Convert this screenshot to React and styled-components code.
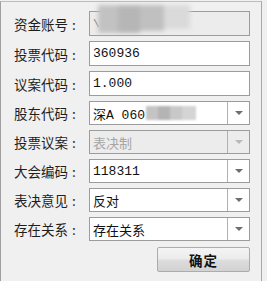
import React from "react";
import styled, { createGlobalStyle } from "styled-components";

const GlobalStyle = createGlobalStyle`
  html, body {
    margin: 0;
    padding: 0;
    background: #f0f0f0;
  }
  body {
    font-family: "Noto Sans CJK SC", "Liberation Sans", sans-serif;
  }
`;

const rows = [
  { label: "资金账号", kind: "masked" },
  { label: "投票代码", kind: "text", value: "360936" },
  { label: "议案代码", kind: "text", value: "1.000" },
  { label: "股东代码", kind: "combo", value: "深A 060", masked: true },
  { label: "投票议案", kind: "combo", value: "表决制", disabled: true },
  { label: "大会编码", kind: "combo", value: "118311" },
  { label: "表决意见", kind: "combo", value: "反对" },
  { label: "存在关系", kind: "combo", value: "存在关系" },
];

const App = () => {
  return (
    <>
      <GlobalStyle />
      <Frame>
        <Form>
          {rows.map((row) => (
            <Row key={row.label} $combo={row.kind === "combo"}>
              <Label>
                {row.label}
                <Colon>:</Colon>
              </Label>
              {row.kind === "combo" ? (
                <Combo $disabled={row.disabled}>
                  <ComboText $disabled={row.disabled}>
                    {row.value}
                    {row.masked && (
                      <Smudge>
                        <Blot $w={12} $c="#c4c4c4" />
                        <Blot $w={12} $c="#b4b4b4" />
                        <Blot $w={12} $c="#c8c8c8" />
                        <Blot $w={14} $c="#d4d4d4" />
                      </Smudge>
                    )}
                  </ComboText>
                  <ArrowBox>
                    <Arrow $disabled={row.disabled} />
                  </ArrowBox>
                </Combo>
              ) : (
                <Field $readonly={row.kind === "masked"}>
                  {row.kind === "masked" ? (
                    <>
                      <Tick>\</Tick>
                      <TopSmudge>
                        <Blot $w={20} $c="#c2c2c2" $h={28} />
                        <Blot $w={22} $c="#b6b6b6" $h={28} />
                        <Blot $w={24} $c="#c0c0c0" $h={26} />
                        <Blot $w={26} $c="#dadada" $h={24} />
                      </TopSmudge>
                    </>
                  ) : (
                    row.value
                  )}
                </Field>
              )}
            </Row>
          ))}
        </Form>
        <Footer>
          <Button>确定</Button>
        </Footer>
      </Frame>
    </>
  );
};

export default App;

const Frame = styled.div`
  box-sizing: border-box;
  width: 262px;
  height: 281px;
  margin-top: 1px;
  border-left: 1px solid #a0a0a0;
  border-top: 1px solid #bdbdbd;
  border-right: 1px solid #a8a8a8;
  padding: 9px 0 0 13px;
`;
const Form = styled.div`
  display: flex;
  flex-direction: column;
  gap: 5px;
`;
const Row = styled.div`
  display: grid;
  grid-template-columns: 75px 161px;
  align-items: center;
  height: ${(p) => (p.$combo ? "24px" : "25px")};
`;
const Label = styled.div`
  font-size: 13.5px;
  color: #1e1e1e;
  white-space: nowrap;
`;
const Colon = styled.span`
  margin-left: 4px;
`;
const Field = styled.div`
  position: relative;
  box-sizing: border-box;
  height: 25px;
  border: 1px solid #9c9c9c;
  background: ${(p) => (p.$readonly ? "#ececec" : "#ffffff")};
  padding-left: 3px;
  display: flex;
  align-items: center;
  font-family: "Liberation Mono", "Noto Sans CJK SC", monospace;
  font-size: 13px;
  color: #111;
`;
const Tick = styled.span`
  color: #777;
  font-size: 11px;
`;
const TopSmudge = styled.div`
  position: absolute;
  left: 8px;
  top: -7px;
  display: flex;
  align-items: flex-start;
  filter: blur(2px);
`;
const Smudge = styled.span`
  display: inline-flex;
  margin-left: 1px;
  vertical-align: middle;
  filter: blur(1px);
`;
const Blot = styled.span`
  display: inline-block;
  width: ${(p) => p.$w}px;
  height: ${(p) => p.$h || 14}px;
  background: ${(p) => p.$c};
`;
const Combo = styled.div`
  box-sizing: border-box;
  height: 24px;
  border: 1px solid #9c9c9c;
  background: ${(p) => (p.$disabled ? "#ececec" : "#ffffff")};
  display: flex;
`;
const ComboText = styled.div`
  flex: 1;
  display: flex;
  align-items: center;
  padding-left: 3px;
  font-family: "Liberation Mono", "Noto Sans CJK SC", monospace;
  font-size: 13px;
  color: ${(p) => (p.$disabled ? "#a6a6a6" : "#111")};
  white-space: nowrap;
  overflow: hidden;
`;
const ArrowBox = styled.div`
  width: 21px;
  border-left: 1px solid #b0b0b0;
  display: flex;
  align-items: center;
  justify-content: center;
`;
const Arrow = styled.div`
  width: 0;
  height: 0;
  border-left: 4px solid transparent;
  border-right: 4px solid transparent;
  border-top: 4px solid ${(p) => (p.$disabled ? "#b8b8b8" : "#6e6e6e")};
`;
const Footer = styled.div`
  display: flex;
  justify-content: flex-end;
  padding-right: 11px;
  margin-top: 6px;
`;
const Button = styled.button`
  box-sizing: border-box;
  width: 93px;
  height: 25px;
  border: 1px solid #acacac;
  border-radius: 2px;
  background: linear-gradient(#f4f4f4 0%, #ececec 45%, #dcdcdc 55%, #d2d2d2 100%);
  font-family: "Noto Sans CJK SC", sans-serif;
  font-size: 13.5px;
  font-weight: 600;
  color: #111;
  letter-spacing: 1px;
  padding: 0;
`;
